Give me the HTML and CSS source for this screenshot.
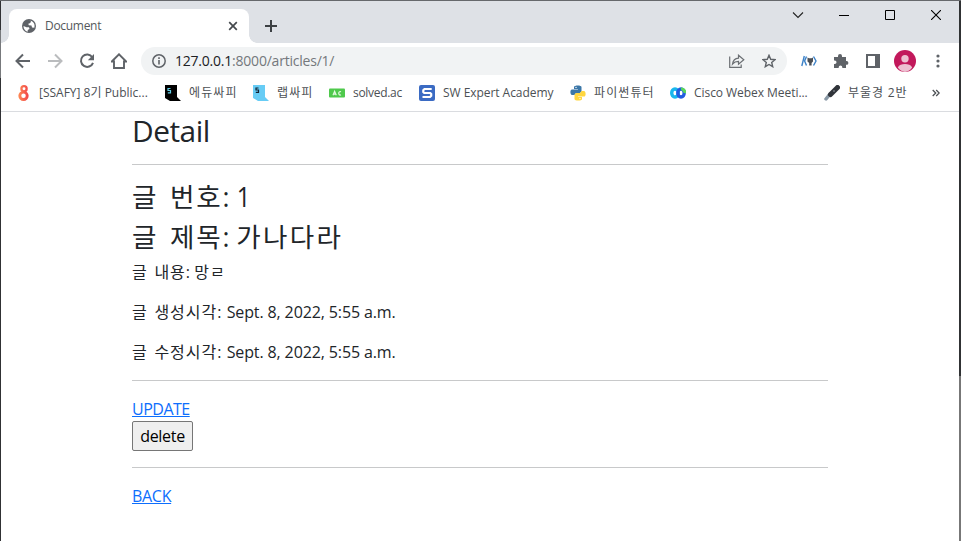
FILE: index.html
```html
<!DOCTYPE html>
<html lang="ko">
<head>
<meta charset="utf-8">
<title>Document</title>
<link rel="stylesheet" href="styles.css">
</head>
<body>
<div class="window">
  <header class="tabstrip">
    <div class="tab">
      <svg class="globe" width="14" height="14" viewBox="0 0 14 14"><circle cx="7" cy="7" r="7" fill="#5f6368"/><path d="M1.5 7 4.5 8.3 7 8.2 7.5 10 5.7 11v1.7C3 12 1.4 9.600 1.5 7zM7 1.500 9 2 8.300 4 6.300 4.700 6.800 6.200 9.500 6.500 10 8.500 12.300 8.700C13.400 5.500 11.500 1.500 7 1.500z" fill="#fff"/></svg>
      <span class="tab-title">Document</span>
      <svg width="10" height="10" viewBox="0 0 10 10"><path d="M1.200 1.200 8.800 8.800M8.800 1.200 1.200 8.800" stroke="#45494d" stroke-width="1.700"/></svg>
    </div>
    <svg class="plus" width="12" height="12" viewBox="0 0 12 12"><path d="M6 0v12M0 6h12" stroke="#3c4043" stroke-width="2"/></svg>
    <div class="controls">
      <svg width="12" height="12" viewBox="0 0 12 12"><path d="m1 3.500 5 5 5-5" fill="none" stroke="#222" stroke-width="1.100"/></svg>
      <svg width="10" height="12" viewBox="0 0 10 12"><path d="M0 6.500h10" stroke="#000"/></svg>
      <svg width="10" height="10" viewBox="0 0 10 10"><path d="M.5.500h9v9h-9z" fill="none" stroke="#000"/></svg>
      <svg width="10" height="10" viewBox="0 0 10 10"><path d="m0 0 10 10M10 0 0 10" stroke="#000" stroke-width="1.100"/></svg>
    </div>
  </header>
  <nav class="toolbar">
    <svg width="16" height="16" viewBox="0 0 16 16"><path d="M15 8H2M8 1.500 1.500 8 8 14.500" fill="none" stroke="#5f6368" stroke-width="2"/></svg>
    <svg width="16" height="16" viewBox="0 0 16 16"><path d="M1 8h13M8 1.500 14.500 8 8 14.500" fill="none" stroke="#babcbe" stroke-width="2"/></svg>
    <svg width="16" height="16" viewBox="0 0 16 16"><path d="M13.300 4.200A6.200 6.200 0 1 0 14 9.800" fill="none" stroke="#5f6368" stroke-width="2"/><path d="M15 1v6.200H8.800z" fill="#5f6368"/></svg>
    <svg width="16" height="16" viewBox="0 0 16 16"><path d="M.8 8.500 8 1.300l7.200 7.200H13V15H3V8.500z" fill="none" stroke="#5f6368" stroke-width="1.900"/></svg>
    <div class="address">
      <svg width="14" height="14" viewBox="0 0 14 14"><circle cx="7" cy="7" r="6.200" fill="none" stroke="#5f6368" stroke-width="1.500"/><path d="M7 6v4.500M7 3.300v1.600" stroke="#5f6368" stroke-width="1.600"/></svg>
      <span class="url"><b>127.0.0.1</b>:8000/articles/1/</span>
      <svg class="share" width="16" height="14" viewBox="0 0 16 14"><path d="M.7 2.500v10.800h11.500V10.500M3.500 10C4 6.500 6 4.500 9.500 4.200V1.200l5.300 4.600-5.300 4.500V7.400C7 7.400 5 8.200 3.500 10z" fill="none" stroke="#6b6f73" stroke-width="1.200"/></svg>
      <svg width="14" height="14" viewBox="0 0 14 14"><path d="m7 1.300 1.700 4 4.300.4-3.300 2.800 1 4.200L7 10.500l-3.700 2.200 1-4.200L1 5.700l4.300-.4z" fill="none" stroke="#5f6368" stroke-width="1.400"/></svg>
    </div>
    <svg class="ext" width="16" height="12" viewBox="0 0 16 12"><path d="M3.300 1 .8 11M5.500 1.500 3.600 6l1.900 4.500M12.500 1.500 15 6l-2.500 4.500" fill="none" stroke="#3d82c8" stroke-width="1.400"/><path d="M6.500 2.500 8 3.200h2.500l1.500-.7v4L10.600 8v2.500H8.200V8L6.500 6.500z" fill="#4b4f54"/></svg>
    <svg class="puzzle" width="16" height="16" viewBox="0 0 16 16"><path d="M1 4h4V3a2 2 0 0 1 4 0v1h4v4h.5a1.900 1.900 0 0 1 0 3.800H13V15H9.300v-.8a1.800 1.800 0 0 0-3.600 0v.8H1v-4h.8a1.700 1.700 0 0 0 0-3.400H1z" fill="#5f6368"/></svg>
    <svg class="panel" width="14" height="14" viewBox="0 0 14 14"><path d="M0 0h14v14H0zM2 2v10h7V2z" fill="#5f6368" fill-rule="evenodd"/></svg>
    <svg class="avatar" width="22" height="22" viewBox="0 0 22 22"><circle cx="11" cy="11" r="11" fill="#c2185b"/><circle cx="11" cy="8.700" r="3.700" fill="#edbfd0"/><path d="M3.800 17.500C5 14.900 8 14 11 14s6 .9 7.200 3.500A11 11 0 0 1 11 22a11 11 0 0 1-7.200-4.500z" fill="#edbfd0"/></svg>
    <svg class="dots" width="4" height="14" viewBox="0 0 4 14"><g fill="#5f6368"><circle cx="2" cy="2" r="1.600"/><circle cx="2" cy="7" r="1.600"/><circle cx="2" cy="12" r="1.600"/></g></svg>
  </nav>
  <nav class="bookmarks">
    <a><svg width="16" height="16" viewBox="0 0 16 16"><defs><linearGradient id="g" gradientUnits="userSpaceOnUse" x1="3" y1="0" x2="14" y2="0"><stop stop-color="#ff8d55"/><stop offset="1" stop-color="#f04048"/></linearGradient></defs><g fill="none" stroke="url(#g)"><circle cx="9" cy="3.800" r="2.600" stroke-width="2.300"/><circle cx="8.500" cy="10.800" r="3.700" stroke-width="2.900"/></g></svg><span>[SSAFY] 8기 Public...</span></a>
    <a><svg width="16" height="16" viewBox="0 0 16 16"><path d="M0 0h12v12l4 4H5l-5-3z" fill="#000"/><path d="M5.500 3.500H3v2h2.500v2.300H2.800" fill="none" stroke="#62cde5" stroke-width="1.200"/></svg><span class="ko">에듀싸피</span></a>
    <a><svg width="16" height="16" viewBox="0 0 16 16"><path d="M0 0h12v12l4 4H5l-5-3z" fill="#67ccf5"/><path d="M5.500 3H3v2h2.500v2.300H2.800" fill="none" stroke="#123" stroke-width="1.200"/></svg><span class="ko">랩싸피</span></a>
    <a><svg width="16" height="16" viewBox="0 0 16 16"><rect y="3.500" width="16" height="9" rx="1" fill="#4fc94c"/><path d="m4 10.300 1.600-4 1.700 4M4.700 9.200h2M12 6.800c-3-1.500-3 4.400 0 3" fill="none" stroke="#e2f8df" stroke-width="1.200"/></svg><span class="solved">solved.ac</span></a>
    <a><svg width="16" height="16" viewBox="0 0 16 16"><rect width="16" height="16" rx="2" fill="#3b6bc3"/><path d="M12.700 4H5.500L4.300 5.200V7l1 1h5.900l1 1v1.800L11 12H3.500" fill="none" stroke="#fff" stroke-width="2.200"/></svg><span class="latin">SW Expert Academy</span></a>
    <a><svg width="16" height="16" viewBox="0 0 16 16"><path d="M4 4V2c0-2 7.500-2 7.500 0v4.500L10 8H6L4.500 10H2C0 10-.3 4.500 2 4.500h6V4z" fill="#3b77a8"/><path d="M12 12v2c0 2-7.500 2-7.500 0V9.500L6 8h4l1.500-2H14c2 0 2.300 5.500 0 5.500H8v.5z" fill="#ffd63f"/><circle cx="6" cy="2.400" r=".7" fill="#fff"/><circle cx="10" cy="13.600" r=".7" fill="#fff"/></svg><span class="ko">파이썬튜터</span></a>
    <a><svg width="16" height="16" viewBox="0 0 16 16"><ellipse cx="5" cy="8" rx="3.300" ry="4" fill="none" stroke="#19b7ed" stroke-width="3.400"/><ellipse cx="11" cy="8" rx="3.200" ry="4" fill="none" stroke="#225be0" stroke-width="3.400"/><path d="M11 4a3 3 0 0 1 3.400 4" fill="none" stroke="#58d659" stroke-width="3"/></svg><span class="latin">Cisco Webex Meeti...</span></a>
    <a><svg width="16" height="16" viewBox="0 0 16 16"><path d="M2 14 6 9" stroke="#8998a5" stroke-width="3.500" stroke-linecap="round"/><path d="m6.500 9.500 7-7" stroke="#30343a" stroke-width="5" stroke-linecap="round"/><circle cx="10" cy="6" r=".7" fill="#b8bdc4"/></svg><span class="ko class2">부울경 2반</span></a>
    <svg class="more" width="8" height="8" viewBox="0 0 8 8"><path d="m.7 1 3 3-3 3M4.200 1l3 3-3 3" fill="none" stroke="#4d5155" stroke-width="1.300"/></svg>
  </nav>
  <main class="container">
    <h2>Detail</h2>
    <hr>
    <h3><span class="label">글 번호</span>: <span class="number">1</span></h3>
    <h3><span class="label">글 제목</span>: <span class="value">가나다라</span></h3>
    <p><span class="label">글 내용</span>: <span class="value">망ㄹ</span></p>
    <p><span class="label">글 생성시각</span>: <span class="date">Sept. 8, 2022, 5:55 a.m.</span></p>
    <p><span class="label">글 수정시각</span>: <span class="date">Sept. 8, 2022, 5:55 a.m.</span></p>
    <hr>
    <a class="link update" href="#">UPDATE</a>
    <form><button type="button">delete</button></form>
    <hr>
    <a class="link back" href="#">BACK</a>
  </main>
</div>
</body>
</html>
```

FILE: styles.css
```css
* { box-sizing: border-box; }
body {
  margin: 0;
  height: 541px;
  overflow: hidden;
  font-family: "Open Sans", "Noto Sans CJK KR", sans-serif;
  color: #212529;
}
svg { display: block; flex: none; }
.window {
  height: 541px;
  padding: 1px 2px 0 1px;
  background:
    linear-gradient(#66686c, #66686c) 0 0 / 100% 1px no-repeat,
    linear-gradient(#303134 30px, #77797c 30px 78px, #303134 78px) 0 0 / 1px 100% no-repeat,
    linear-gradient(#303234 376px, #777 376px) 100% 0 / 2px 100% no-repeat,
    #fff;
}
.tabstrip {
  display: flex;
  height: 42px;
  padding: 8px 18px 0 8px;
  background: #dee1e6;
}
.tab {
  position: relative;
  display: flex;
  align-items: center;
  width: 240px;
  height: 34px;
  padding: 0 11px 0 13px;
  border-radius: 8px 8px 0 0;
  background: #fff;
}
.tab::before, .tab::after {
  content: "";
  position: absolute;
  bottom: 0;
  width: 8px;
  height: 8px;
}
.tab::before { left: -8px; background: radial-gradient(circle at 0 0, transparent 7.5px, #fff 8px); }
.tab::after { right: -8px; background: radial-gradient(circle at 100% 0, transparent 7.5px, #fff 8px); }
.tab-title {
  flex: 1;
  margin-left: 9px;
  font-size: 12px;
  line-height: 16px;
  letter-spacing: -.3px;
  color: #54585c;
}
.plus { margin: 11px 0 0 16px; }
.controls {
  display: flex;
  align-items: center;
  gap: 36px;
  height: 12px;
  margin-left: auto;
}
.controls svg:first-child { margin-right: -1px; }
.toolbar { display: flex; align-items: center; height: 36px; padding-left: 14px; }
.toolbar > svg { margin-right: 16px; }
.address {
  display: flex;
  align-items: center;
  width: 646px;
  height: 28px;
  margin-left: -2px;
  padding: 0 11px;
  border-radius: 14px;
  background: #f1f3f4;
}
.url {
  flex: 1;
  margin-left: 9px;
  font-size: 14px;
  line-height: 20px;
  letter-spacing: -.22px;
  color: #74787c;
  white-space: nowrap;
}
.url b { font-weight: inherit; color: #202124; }
.share { margin-right: 17px; }
.toolbar .ext { margin: 0 16px 0 14px; }
.toolbar .puzzle { margin-right: 17px; }
.toolbar .panel { margin-right: 14px; }
.toolbar .avatar { margin-right: 20px; }
.toolbar .dots { margin: 0; }
.bookmarks {
  display: grid;
  grid-template-columns: 150px 88px 76px 90px 151px 100px 154px 108px 8px;
  align-items: center;
  height: 33px;
  padding: 0 0 5px 14px;
  border-bottom: 1px solid #dadce0;
}
.bookmarks a { display: flex; align-items: center; gap: 8px; }
.bookmarks span { font-size: 12px; line-height: 16px; color: #4c5054; white-space: nowrap; }
.bookmarks .ko { letter-spacing: 1.1px; }
.bookmarks .class2 { letter-spacing: .9px; }
.bookmarks .solved { letter-spacing: -.3px; }
.bookmarks .latin { letter-spacing: -.05px; }
.container {
  width: 696px;
  margin-left: 131px;
  font-size: 16px;
  line-height: 24px;
  white-space: nowrap;
}
h2, h3 { margin: 0 0 8px; padding-top: 1px; font-weight: 400; line-height: 1.2; }
h2 { height: 35.8px; font-size: 29.85px; letter-spacing: -.5px; }
h3 { height: 31.5px; padding-top: 1.5px; font-size: 26.55px; }
h3 .label { letter-spacing: 1.8px; word-spacing: 3px; }
h3 .value { letter-spacing: 2.3px; }
h3 .number { display: inline-block; transform: scaleX(.9); }
p { margin: 0 0 16px; height: 24px; }
p .label { letter-spacing: 1px; word-spacing: 1.5px; }
p .value { letter-spacing: 1px; }
.date { margin-left: 1px; letter-spacing: -.12px; }
hr { margin: 16px 0; border: 0; border-top: 1px solid #c8c9ca; }
.link { display: block; width: max-content; height: 24px; color: #0d6efd; }
.update { letter-spacing: -.5px; }
.back { letter-spacing: -.3px; }
form { margin: 0; height: 30px; }
button {
  width: 61px;
  height: 30px;
  padding: 0;
  border: 1px solid #767676;
  border-radius: 2px;
  background: #efefef;
  color: #000;
  font: inherit;
  letter-spacing: -.3px;
}
```
